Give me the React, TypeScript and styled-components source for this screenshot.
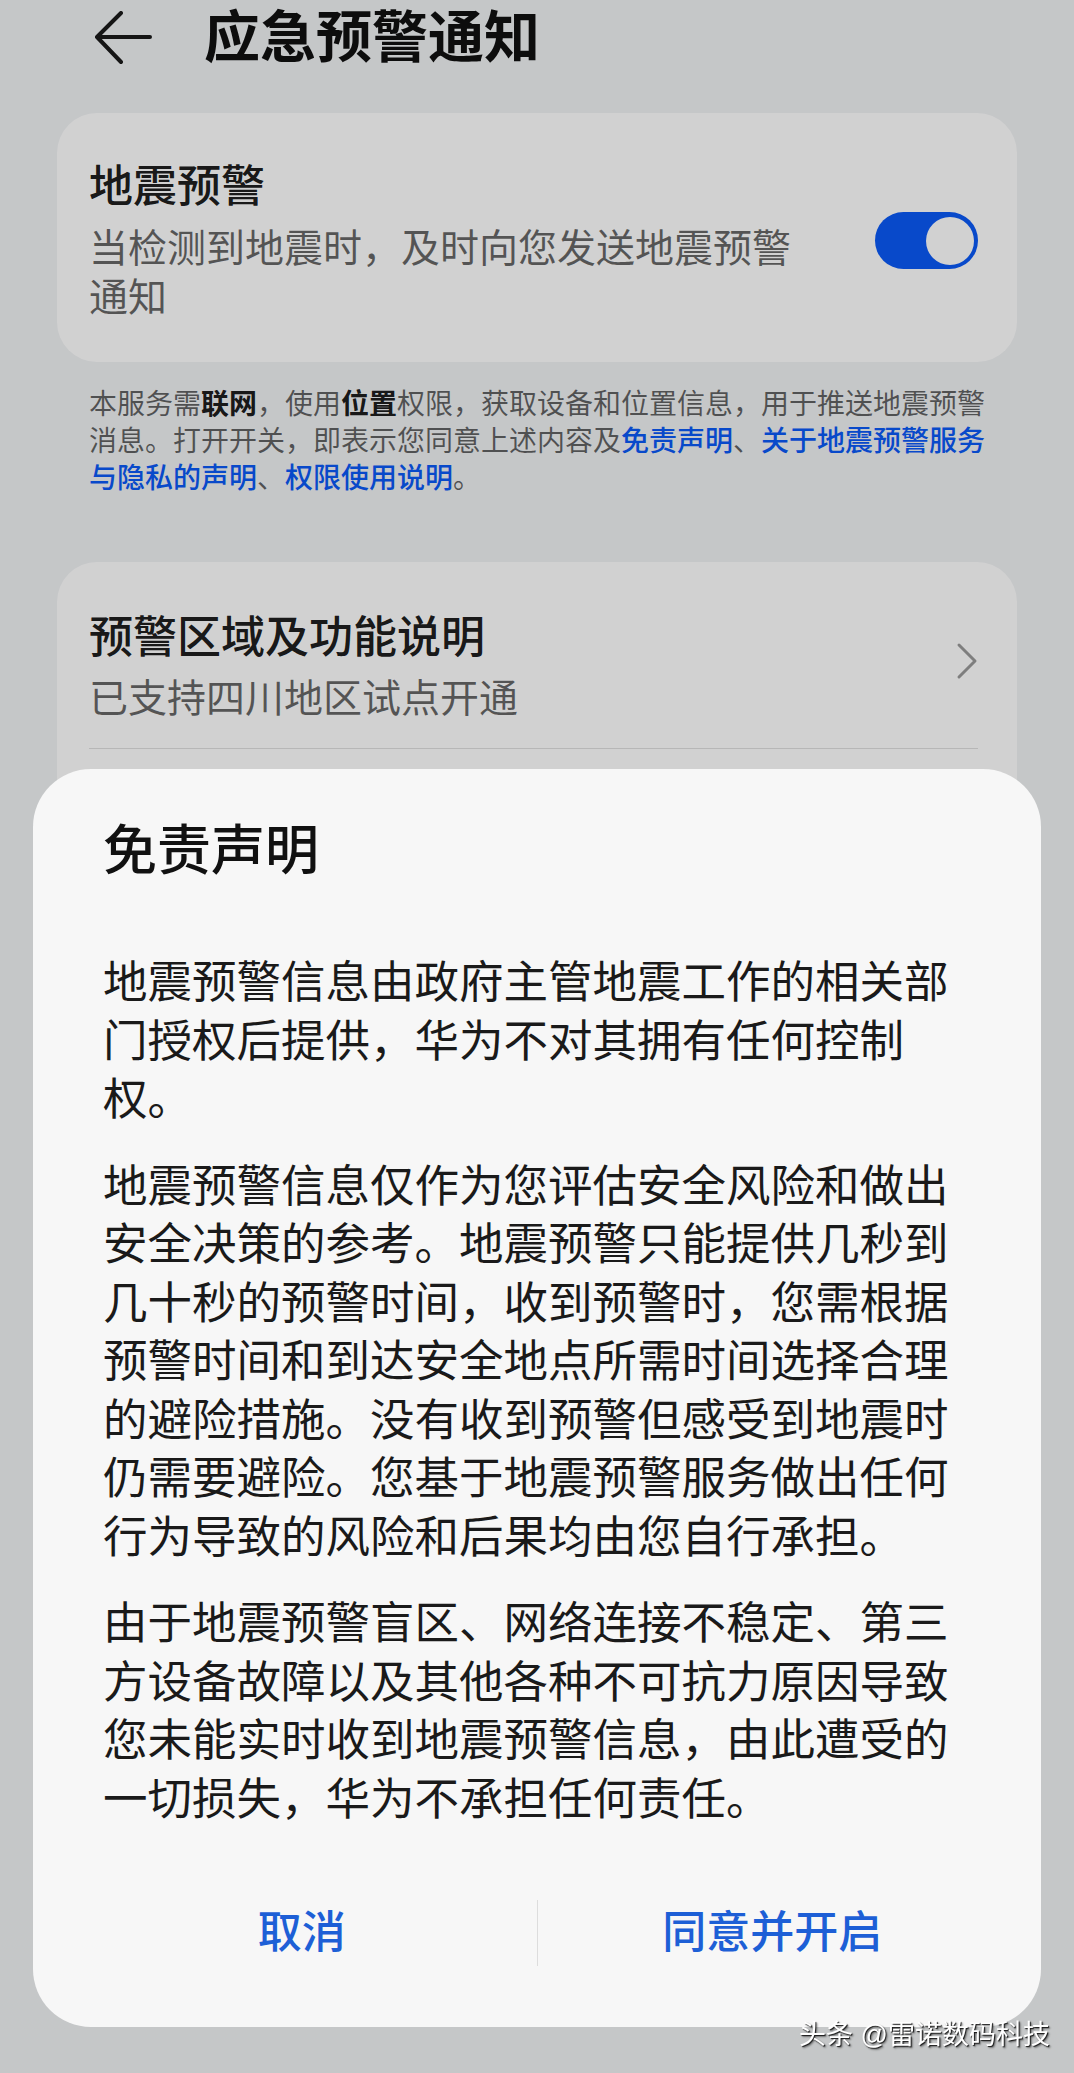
import React from 'react';
import styled, { createGlobalStyle } from 'styled-components';

const GlobalStyle = createGlobalStyle`
  html, body {
    margin: 0;
    padding: 0;
  }
  body {
    background: #f1f3f5;
    font-family: "Liberation Sans", "Noto Sans CJK SC", sans-serif;
    color: rgba(0, 0, 0, 0.9);
  }
`;

const Page = styled.div`
  min-height: 2073px;
  background: #f1f3f5;
  overflow: hidden;
`;

const Header = styled.header`
  height: 76px;
  display: flex;
  align-items: center;
  gap: 52px;
  padding-left: 94px;
`;

const PageTitle = styled.h1`
  margin: 0;
  font-size: 56px;
  line-height: 64px;
  font-weight: 700;
  color: #111;
`;

const Card = styled.section<{ $top: number }>`
  margin: ${(p) => p.$top}px 57px 0;
  background: #fff;
  border-radius: 40px;
  padding: 0 39px 0 32px;
`;

const SwitchRow = styled.div`
  display: flex;
  align-items: center;
  gap: 66px;
  padding: 46px 0 40px;
`;

const LinkRow = styled.div`
  display: flex;
  align-items: center;
  justify-content: space-between;
  padding: 48px 0 25px;
  border-bottom: 1px solid rgba(0, 0, 0, 0.12);
`;

const TextCol = styled.div`
  flex: 1;
`;

const ItemTitle = styled.div`
  font-size: 44px;
  line-height: 56px;
  font-weight: 500;
`;

const ItemSub = styled.div<{ $gap: number }>`
  margin-top: ${(p) => p.$gap}px;
  font-size: 39px;
  line-height: 49px;
  color: rgba(0, 0, 0, 0.6);
`;

const Track = styled.div`
  width: 103px;
  height: 57px;
  border-radius: 29px;
  background: #0a59f7;
  display: flex;
  align-items: center;
  justify-content: flex-end;
  padding: 0 4px;
  box-sizing: border-box;
  flex-shrink: 0;
`;

const Knob = styled.div`
  width: 48px;
  height: 48px;
  border-radius: 50%;
  background: #fff;
`;

const Chevron = styled.svg`
  margin-bottom: 12px;
  flex-shrink: 0;
`;

const CardFiller = styled.div`
  height: 220px;
`;

const Notice = styled.div`
  margin: 24px 57px 0;
  padding: 0 28px 0 32px;
  font-size: 28px;
  line-height: 37px;
  color: rgba(0, 0, 0, 0.6);
`;

// one line of the notice; the wrap points are fixed in the screenshot
const NoticeLine = styled.div`
  white-space: nowrap;
`;

const Strong = styled.b`
  font-weight: 700;
  color: rgba(0, 0, 0, 0.9);
`;

const Link = styled.span`
  color: #0a59f7;
  font-weight: 500;
`;

const Scrim = styled.div`
  position: fixed;
  inset: 0;
  background: rgba(0, 0, 0, 0.18);
`;

const Sheet = styled.div`
  position: fixed;
  left: 33px;
  right: 33px;
  bottom: 46px;
  background: #f7f7f7;
  border-radius: 58px;
  padding: 50px 34px 54px;
`;

const SheetTitle = styled.h2`
  margin: 0;
  padding-left: 36px;
  font-size: 54px;
  line-height: 64px;
  font-weight: 500;
  color: #111;
`;

const SheetBody = styled.div`
  margin-top: 71px;
  padding: 0 42px 0 36px;
`;

const Para = styled.p`
  margin: 0;
  font-size: 44.5px;
  line-height: 58.5px;
  color: #1a1a1a;
  & + & {
    margin-top: 28px;
  }
`;

const Actions = styled.div`
  margin-top: 64px;
  height: 80px;
  display: grid;
  grid-template-columns: 1fr 1px 1fr;
  align-items: center;
`;

const ActionButton = styled.button`
  border: none;
  background: none;
  padding: 0;
  font-family: inherit;
  font-size: 44px;
  line-height: 80px;
  font-weight: 500;
  color: #1d5fd6;
  text-align: center;
`;

const Split = styled.div`
  height: 66px;
  background: rgba(0, 0, 0, 0.1);
`;

const Watermark = styled.div`
  position: fixed;
  right: 24px;
  bottom: 22px;
  font-size: 27px;
  line-height: 32px;
  color: #fff;
  text-shadow: 1px 1px 1px rgba(0, 0, 0, 0.85), 2px 2px 2px rgba(0, 0, 0, 0.4);
`;

const BackArrow = () => (
  <svg width="58" height="54" viewBox="0 0 58 54" fill="none">
    <path
      d="M56 26H4M27 2L3 26L27 51"
      stroke="#1a1a1a"
      strokeWidth="4"
      strokeLinecap="round"
      strokeLinejoin="round"
    />
  </svg>
);

const App = () => {
  return (
    <>
      <GlobalStyle />
      <Page>
        <Header>
          <BackArrow />
          <PageTitle>应急预警通知</PageTitle>
        </Header>

        <Card $top={37}>
          <SwitchRow>
            <TextCol>
              <ItemTitle>地震预警</ItemTitle>
              <ItemSub $gap={9}>当检测到地震时，及时向您发送地震预警通知</ItemSub>
            </TextCol>
            <Track>
              <Knob />
            </Track>
          </SwitchRow>
        </Card>

        <Notice>
          <NoticeLine>
            本服务需<Strong>联网</Strong>，使用<Strong>位置</Strong>权限，获取设备和位置信息，用于推送地震预警
          </NoticeLine>
          <NoticeLine>
            消息。打开开关，即表示您同意上述内容及<Link>免责声明</Link>、<Link>关于地震预警服务</Link>
          </NoticeLine>
          <NoticeLine>
            <Link>与隐私的声明</Link>、<Link>权限使用说明</Link>。
          </NoticeLine>
        </Notice>

        <Card $top={65}>
          <LinkRow>
            <TextCol>
              <ItemTitle>预警区域及功能说明</ItemTitle>
              <ItemSub $gap={8}>已支持四川地区试点开通</ItemSub>
            </TextCol>
            <Chevron width="22" height="38" viewBox="0 0 22 38" fill="none">
              <path d="M3 3L19 19L3 35" stroke="#9a9a9a" strokeWidth="3" strokeLinecap="round" strokeLinejoin="round" />
            </Chevron>
          </LinkRow>
          <CardFiller />
        </Card>
      </Page>

      <Scrim />

      <Sheet>
        <SheetTitle>免责声明</SheetTitle>
        <SheetBody>
          <Para>地震预警信息由政府主管地震工作的相关部门授权后提供，华为不对其拥有任何控制权。</Para>
          <Para>
            地震预警信息仅作为您评估安全风险和做出安全决策的参考。地震预警只能提供几秒到几十秒的预警时间，收到预警时，您需根据预警时间和到达安全地点所需时间选择合理的避险措施。没有收到预警但感受到地震时仍需要避险。您基于地震预警服务做出任何行为导致的风险和后果均由您自行承担。
          </Para>
          <Para>
            由于地震预警盲区、网络连接不稳定、第三方设备故障以及其他各种不可抗力原因导致您未能实时收到地震预警信息，由此遭受的一切损失，华为不承担任何责任。
          </Para>
        </SheetBody>
        <Actions>
          <ActionButton>取消</ActionButton>
          <Split />
          <ActionButton>同意并开启</ActionButton>
        </Actions>
      </Sheet>

      <Watermark>头条 @雷诺数码科技</Watermark>
    </>
  );
};

export default App;
